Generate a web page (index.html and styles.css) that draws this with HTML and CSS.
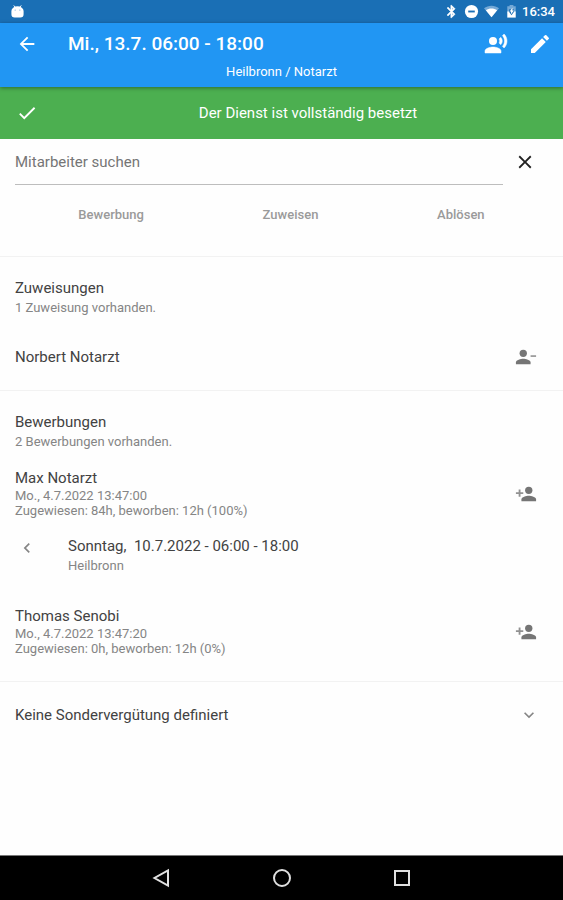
FILE: index.html
```html
<!DOCTYPE html>
<html lang="de">
<head>
<meta charset="utf-8">
<meta name="viewport" content="width=device-width, initial-scale=1">
<title>Dienst</title>
<link rel="stylesheet" href="styles.css">
</head>
<body>
<div class="status-bar">
  <svg class="icon-status" viewBox="0 0 16 16"><path fill="currentColor" d="M4 1.500l1.500 2M12 1.500l-1.500 2" stroke="currentColor"/><path fill="currentColor" d="M1.500 7.500a6.500 5 0 0 1 13 0v3.500a3.500 3.500 0 0 1-3.500 3.500h-6a3.500 3.500 0 0 1-3.500-3.500z"/><circle cx="5.500" cy="6.500" r=".7" fill="#7fb0da"/><circle cx="10.500" cy="6.500" r=".7" fill="#7fb0da"/></svg>
  <div class="status-right">
    <div class="status-icons">
      <svg class="icon-status" viewBox="0 0 24 24"><path fill="currentColor" d="M17.710 7.710L12 2h-1v7.590L6.410 5 5 6.410 10.590 12 5 17.590 6.410 19 11 14.410V22h1l5.710-5.710-4.300-4.290 4.300-4.290zM13 5.830l1.880 1.880L13 9.590V5.830zm1.880 10.460L13 18.170v-3.760l1.880 1.880z" stroke="currentColor"/></svg>
      <svg class="icon-status" viewBox="0 0 16 16"><circle cx="8" cy="8" r="7" fill="currentColor"/><path d="M4.500 8h7" stroke="#1a6fb5" stroke-width="2"/></svg>
      <svg class="icon-status" viewBox="0 0 16 16"><path fill="#75a9d6" d="M0 4.500C4.500.900 11.500.900 16 4.500L8 14z"/><path fill="currentColor" d="M2 6.700c3.500-2.600 8.500-2.600 12 0L8 14z"/></svg>
      <svg class="icon-status" viewBox="0 0 16 16"><path fill="#75a9d6" d="M6 1h4v1.500h2.500V9h-9V2.500H6z"/><path fill="currentColor" d="M3.500 8h9v6.500h-9z"/><path fill="#1a6fb5" d="M5.500 5.500h5v3L8 12 5.500 8.500z"/><path fill="currentColor" d="M9 4v3h1.500L7.500 11V8H6z"/></svg>
    </div>
    <span class="clock">16:34</span>
  </div>
</div>
<header class="app-bar">
  <div class="app-row">
    <button class="icon-button" aria-label="Zurück"><svg class="icon-nav" viewBox="0 0 24 24"><path fill="currentColor" d="M20 11H7.830l5.590-5.590L12 4l-8 8 8 8 1.410-1.410L7.830 13H20v-2z"/></svg></button>
    <h1>Mi., 13.7. 06:00 - 18:00</h1>
    <button class="icon-button" aria-label="Ansage"><svg class="icon-action" viewBox="0 0 24 24"><circle cx="9" cy="9" r="4" fill="currentColor"/><path fill="currentColor" stroke="currentColor" stroke-width=".5" d="M9 15c-2.670 0-8 1.340-8 4v2h16v-2c0-2.660-5.330-4-8-4zm7.760-9.640l-1.680 1.690c.840 1.180.840 2.710 0 3.890l1.680 1.690c2.020-2.020 2.020-5.070 0-7.270zM20.070 2l-1.630 1.630c2.770 3.020 2.770 7.560 0 10.740L20.070 16c3.900-3.890 3.910-9.950 0-14z"/></svg></button>
    <button class="icon-button" aria-label="Bearbeiten"><svg class="icon-action" viewBox="0 0 24 24"><path fill="currentColor" d="M3 17.250V21h3.750L17.810 9.940l-3.750-3.750L3 17.250zM20.710 7.040a1 1 0 0 0 0-1.410l-2.340-2.340a1 1 0 0 0-1.410 0l-1.830 1.830 3.750 3.750 1.830-1.830z"/></svg></button>
  </div>
  <p class="location">Heilbronn / Notarzt</p>
</header>
<div class="banner" role="status">
  <svg class="icon-nav" viewBox="0 0 24 24"><path fill="currentColor" d="M9 16.170L4.830 12l-1.420 1.410L9 19 21 7l-1.410-1.410z"/></svg>
  <p>Der Dienst ist vollständig besetzt</p>
</div>
<main>
  <section class="search">
    <div class="search-row">
      <input type="search" aria-label="Mitarbeiter suchen" placeholder="Mitarbeiter suchen">
      <button class="icon-button clear" aria-label="Suche leeren"><svg class="icon-nav" viewBox="0 0 24 24"><path fill="currentColor" d="M19 6.410L17.590 5 12 10.590 6.410 5 5 6.410 10.590 12 5 17.590 6.410 19 12 13.410 17.590 19 19 17.590 13.410 12z"/></svg></button>
    </div>
    <div class="actions">
      <button>Bewerbung</button>
      <button>Zuweisen</button>
      <button>Ablösen</button>
    </div>
  </section>
  <section class="group">
    <h2>Zuweisungen</h2>
    <p class="hint">1 Zuweisung vorhanden.</p>
    <div class="person assigned">
      <h3>Norbert Notarzt</h3>
      <button class="icon-button" aria-label="Zuweisung entfernen"><svg class="icon-person" viewBox="0 0 24 24"><circle cx="9" cy="8" r="4" fill="currentColor"/><path fill="currentColor" d="M1 20v-2c0-2.660 5.330-4 8-4s8 1.340 8 4v2z"/><path fill="currentColor" opacity=".7" d="M17 10h6v2h-6z"/></svg></button>
    </div>
  </section>
  <section class="group applications">
    <h2>Bewerbungen</h2>
    <p class="hint">2 Bewerbungen vorhanden.</p>
    <div class="person">
      <div class="details">
        <h3>Max Notarzt</h3>
        <p>Mo., 4.7.2022 13:47:00</p>
        <p>Zugewiesen: 84h, beworben: 12h (100%)</p>
      </div>
      <button class="icon-button" aria-label="Max Notarzt zuweisen"><svg class="icon-person" viewBox="0 0 24 24"><circle cx="15" cy="8" r="4" fill="currentColor"/><path fill="currentColor" d="M7 20v-2c0-2.660 5.330-4 8-4s8 1.340 8 4v2z"/><path fill="currentColor" opacity=".8" d="M6 10V7H4v3H1v2h3v3h2v-3h3v-2z"/></svg></button>
    </div>
    <div class="shift">
      <button class="icon-button" aria-label="Vorheriger Dienst"><svg class="icon-chevron" viewBox="0 0 24 24"><path fill="currentColor" d="M15.410 7.410L14 6l-6 6 6 6 1.410-1.410L10.830 12z"/></svg></button>
      <div>
        <h3>Sonntag, &nbsp;10.7.2022 - 06:00 - 18:00</h3>
        <p class="hint">Heilbronn</p>
      </div>
    </div>
    <div class="person">
      <div class="details">
        <h3>Thomas Senobi</h3>
        <p>Mo., 4.7.2022 13:47:20</p>
        <p>Zugewiesen: 0h, beworben: 12h (0%)</p>
      </div>
      <button class="icon-button" aria-label="Thomas Senobi zuweisen"><svg class="icon-person" viewBox="0 0 24 24"><circle cx="15" cy="8" r="4" fill="currentColor"/><path fill="currentColor" d="M7 20v-2c0-2.660 5.330-4 8-4s8 1.340 8 4v2z"/><path fill="currentColor" opacity=".8" d="M6 10V7H4v3H1v2h3v3h2v-3h3v-2z"/></svg></button>
    </div>
  </section>
  <button class="expander" aria-expanded="false">
    <span>Keine Sondervergütung definiert</span>
    <svg class="icon-chevron" viewBox="0 0 24 24"><path fill="currentColor" d="M16.590 8.590L12 13.170 7.410 8.590 6 10l6 6 6-6z"/></svg>
  </button>
</main>
<nav class="system-nav" aria-label="System">
  <button aria-label="Zurück"><svg viewBox="0 0 20 20"><path d="M16 2.500v15L2.500 10z"/></svg></button>
  <button aria-label="Startbildschirm"><svg viewBox="0 0 20 20"><circle cx="10" cy="10" r="8"/></svg></button>
  <button aria-label="Übersicht"><svg viewBox="0 0 20 20"><path d="M3 3h14v14H3z"/></svg></button>
</nav>
</body>
</html>
```
FILE: styles.css
```css
* {
  box-sizing: border-box;
  margin: 0;
}

body {
  display: flex;
  flex-direction: column;
  min-height: 100vh;
  background: #fefefe;
  color: #424242;
  font: 15px/20px Roboto, sans-serif;
}

button {
  border: 0;
  padding: 0;
  background: none;
  color: inherit;
  font: inherit;
  cursor: pointer;
}

svg {
  display: block;
  fill: none;
}

h2,
h3 {
  font-size: 15px;
  font-weight: 400;
  line-height: 20px;
}

.icon-status { width: 15px; height: 15px; }
.icon-nav { width: 22px; height: 22px; }
.icon-action { width: 24px; height: 24px; }
.icon-person { width: 22px; height: 22px; }
.icon-chevron { width: 20px; height: 20px; }

.icon-button {
  display: grid;
  place-items: center;
  flex: none;
  width: 44px;
  height: 40px;
}

.status-bar {
  display: flex;
  align-items: center;
  justify-content: space-between;
  height: 23px;
  padding: 0 8px 0 10px;
  background: #1a6fb5;
  color: #fff;
}

.status-right {
  display: flex;
  align-items: center;
  gap: 3px;
}

.status-icons {
  display: flex;
  gap: 5px;
}

.clock {
  font-size: 13px;
  font-weight: 500;
}

.app-bar {
  z-index: 1;
  height: 64px;
  background: #2196f3;
  box-shadow: 0 1px 4px rgba(0, 0, 0, 0.4);
  color: #fff;
}

.app-row {
  display: flex;
  align-items: center;
  height: 41px;
  padding: 0 1px 0 5px;
}

h1 {
  flex: 1;
  padding-left: 19px;
  font-size: 19px;
  font-weight: 500;
  line-height: 24px;
}

.location {
  font-size: 13px;
  line-height: 16px;
  text-align: center;
}

.banner {
  display: flex;
  align-items: center;
  height: 52px;
  padding: 0 16px;
  background: #4caf50;
  color: #fff;
}

.banner p {
  flex: 1;
  padding-left: 31px;
  text-align: center;
}

main {
  flex: 1;
}

.search {
  height: 118px;
  border-bottom: 1px solid #f2f2f2;
}

.search-row {
  display: flex;
  align-items: center;
  padding-left: 15px;
  padding-right: 16px;
}

.search-row input {
  flex: 1;
  min-width: 0;
  height: 46px;
  border: 0;
  border-bottom: 1px solid #bdbdbd;
  padding: 0;
  background: none;
  color: #424242;
  font: inherit;
  outline: 0;
}

.search-row input::placeholder {
  color: #757575;
  opacity: 1;
}

.clear {
  color: #212121;
}

.actions {
  display: flex;
  justify-content: space-around;
  padding: 20px 19px;
  color: #9a9a9a;
  font-size: 13px;
  font-weight: 500;
}

.group {
  padding: 21px 15px 0;
  border-bottom: 1px solid #f2f2f2;
}

.hint {
  color: #858585;
  font-size: 13px;
  line-height: 20px;
}

.person {
  display: flex;
  align-items: center;
  justify-content: space-between;
}

.person .icon-button {
  color: #757575;
}

.assigned {
  padding: 19px 0 13px;
}

.details {
  padding: 16px 0 18px;
  color: #858585;
  font-size: 13px;
  line-height: 15px;
}

.details h3,
.shift h3 {
  color: #424242;
}

.shift {
  display: flex;
  align-items: flex-start;
  padding-bottom: 14px;
}

.shift .icon-button {
  width: 24px;
  height: 24px;
  margin-right: 29px;
  color: #858585;
}

.applications {
  padding-bottom: 7px;
}

.expander {
  display: flex;
  align-items: center;
  justify-content: space-between;
  width: 100%;
  height: 66px;
  padding: 0 24px 0 15px;
  text-align: left;
}

.expander svg {
  color: #858585;
}

.system-nav {
  display: flex;
  align-items: center;
  justify-content: center;
  gap: 80px;
  height: 45px;
  border-top: 1px solid #777;
  background: #000;
}

.system-nav button {
  display: grid;
  place-items: center;
  width: 40px;
  height: 40px;
}

.system-nav svg {
  width: 20px;
  height: 20px;
  stroke: #e0e0e0;
  stroke-width: 2;
}
```
